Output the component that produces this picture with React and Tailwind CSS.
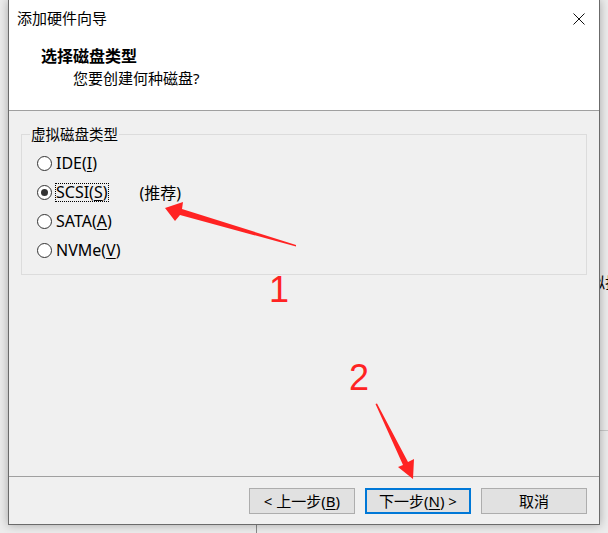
const UI_FONT = "font-['Noto_Sans','Noto_Sans_CJK_SC',sans-serif]"

const DISK_TYPES = [
  { id: 'ide', name: 'IDE', key: 'I' },
  { id: 'scsi', name: 'SCSI', key: 'S', checked: true, note: '(推荐)' },
  { id: 'sata', name: 'SATA', key: 'A' },
  { id: 'nvme', name: 'NVMe', key: 'V' },
]

function Radio({ checked }) {
  return (
    <span className="flex h-[15px] w-[15px] shrink-0 items-center justify-center rounded-full border border-[#333] bg-white">
      {checked && <span className="h-[7px] w-[7px] rounded-full bg-[#333]" />}
    </span>
  )
}

function DiskOption({ item }) {
  return (
    <div className="flex h-[29px] items-center">
      <Radio checked={item.checked} />
      <span
        className={`ml-[3px] leading-[17px] ${
          item.checked ? 'border border-dotted border-black' : 'border border-transparent'
        }`}
      >
        {item.name}(<span className="underline underline-offset-2">{item.key}</span>)
      </span>
      {item.note && <span className="ml-[31px]">{item.note}</span>}
    </div>
  )
}

function WizardButton({ children, primary }) {
  return (
    <button
      className={`flex h-[26px] w-[106px] items-center justify-center bg-[#e1e1e1] text-[15px] text-black ${
        primary ? 'border-2 border-[#0078d7]' : 'border border-[#adadad]'
      }`}
    >
      {children}
    </button>
  )
}

function Arrow({ points }) {
  return <polygon points={points} fill="#ff2323" />
}

export default function App() {
  return (
    <div className={`relative h-[533px] w-[608px] overflow-hidden bg-[#ececec] text-black ${UI_FONT}`}>
      {/* desktop behind the dialog */}
      <div className="absolute left-[590px] top-[271px] whitespace-nowrap text-[15px] leading-[22px]">拟扫</div>
      <div className="absolute left-[600px] top-[430px] h-px w-[8px] bg-[#c8c8c8]" />
      <div className="absolute left-[256px] top-[525px] h-[8px] w-px bg-[#8a8a8a]" />

      {/* dialog window */}
      <div className="relative ml-[8px] flex h-[525px] w-[592px] flex-col border-x border-b border-[#6b6b6b] bg-[#f0f0f0] shadow-[0_0_9px_rgba(0,0,0,0.3)]">
        {/* title + header */}
        <div className="h-[111px] border-b border-[#a0a0a0] bg-white">
          <div className="flex h-[36px] items-center justify-between pl-[8px] pr-[14px]">
            <span className="text-[15px]">添加硬件向导</span>
            <svg width="12" height="12" viewBox="0 0 12 12" className="mt-[1px]">
              <path d="M0.5 0.5 L11.5 11.5 M11.5 0.5 L0.5 11.5" stroke="#111" strokeWidth="1" />
            </svg>
          </div>
          <div className="mt-[9px] pl-[32px] text-[16px] font-bold leading-[22px]">选择磁盘类型</div>
          <div className="pl-[64px] text-[15px] leading-[22px]">您要创建何种磁盘?</div>
        </div>

        {/* body */}
        <div className="flex-1 px-[12px] pt-[13px]">
          <fieldset className="h-[151px] border border-[#dcdcdc] pl-[8px]">
            <legend className="px-[1px] text-[14.5px] leading-[20px]">虚拟磁盘类型</legend>
            <div className="ml-[7px] mt-[5px] text-[16px]">
              {DISK_TYPES.map((item) => (
                <DiskOption key={item.id} item={item} />
              ))}
            </div>
          </fieldset>
        </div>

        {/* footer */}
        <div className="flex h-[48px] justify-end gap-[10px] border-t border-[#a0a0a0] pr-[12px] pt-[11px]">
          <WizardButton>
            &lt; 上一步(<span className="underline underline-offset-2">B</span>)
          </WizardButton>
          <WizardButton primary>
            下一步(<span className="underline underline-offset-2">N</span>) &gt;
          </WizardButton>
          <WizardButton>取消</WizardButton>
        </div>
      </div>

      {/* annotations */}
      <svg className="pointer-events-none absolute inset-0" width="608" height="533">
        <Arrow points="165,208 183,202 182,209 296,245 296,246.5 180,215 175,221" />
        <Arrow points="413,479 398,467 403,465 375.5,404 377,403.5 408,462 414,459" />
      </svg>
      <div className="absolute left-[269px] top-[272px] font-['Liberation_Sans',sans-serif] text-[36px] leading-none text-[#ff2323]">
        1
      </div>
      <div className="absolute left-[349px] top-[360px] font-['Liberation_Sans',sans-serif] text-[36px] leading-none text-[#ff2323]">
        2
      </div>
    </div>
  )
}
